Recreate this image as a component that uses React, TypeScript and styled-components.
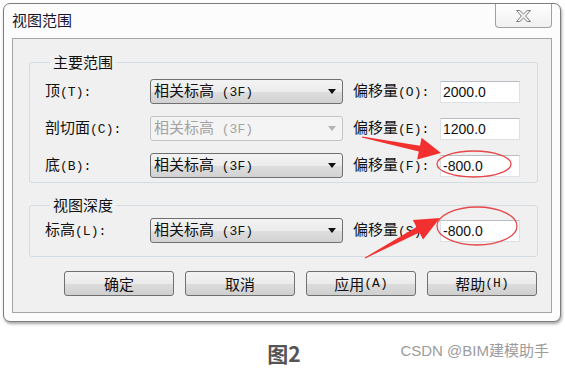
import React from 'react'
import styled, { createGlobalStyle } from 'styled-components'

const GlobalStyle = createGlobalStyle`
  html, body {
    margin: 0;
    padding: 0;
    background: #fff;
  }
  body {
    font-family: "Noto Sans CJK SC", "Noto Sans", sans-serif;
    color: #111;
  }
`

type RowData = {
  label: string
  key: string
  offsetKey: string
  value: string
  disabled?: boolean
}

const mainRows: RowData[] = [
  { label: '顶', key: 'T', offsetKey: 'O', value: '2000.0' },
  { label: '剖切面', key: 'C', offsetKey: 'E', value: '1200.0', disabled: true },
  { label: '底', key: 'B', offsetKey: 'F', value: '-800.0' },
]

const depthRows: RowData[] = [{ label: '标高', key: 'L', offsetKey: 'S', value: '-800.0' }]

const buttons = [
  { text: '确定' },
  { text: '取消' },
  { text: '应用', key: 'A' },
  { text: '帮助', key: 'H' },
]

const Row = ({ row }: { row: RowData }) => (
  <RowLine>
    <Label $w={105}>
      {row.label}
      <Mono>({row.key}):</Mono>
    </Label>
    <Combo $disabled={row.disabled}>
      <span>
        相关标高<Mono> (3F)</Mono>
      </span>
      <Caret $disabled={row.disabled} />
    </Combo>
    <Label $w={87} $ml={10}>
      偏移量<Mono>({row.offsetKey}):</Mono>
    </Label>
    <Field>{row.value}</Field>
  </RowLine>
)

export default function App() {
  return (
    <Page>
      <GlobalStyle />
      <Window>
        <TitleBar>
          <Title>视图范围</Title>
          <CloseBtn>
            <svg width="15" height="12" viewBox="0 0 15 12">
              <polygon
                points="0.5,0.5 3.8,0.5 7.5,4 11.2,0.5 14.5,0.5 9.6,6 14.5,11.5 11.2,11.5 7.5,8 3.8,11.5 0.5,11.5 5.4,6"
                fill="#f4f4f4"
                stroke="#7b7b7b"
                strokeWidth="1"
                strokeLinejoin="round"
              />
            </svg>
          </CloseBtn>
        </TitleBar>
        <Client>
          <Group $pt={9} $pb={4}>
            <Legend>主要范围</Legend>
            {mainRows.map((r) => (
              <Row key={r.key} row={r} />
            ))}
          </Group>
          <Group $pt={5} $pb={13} $mt={14}>
            <Legend>视图深度</Legend>
            {depthRows.map((r) => (
              <Row key={r.key} row={r} />
            ))}
          </Group>
          <ButtonRow>
            {buttons.map((b) => (
              <Button key={b.text}>
                {b.text}
                {b.key && <Mono>({b.key})</Mono>}
              </Button>
            ))}
          </ButtonRow>
        </Client>
      </Window>
      <Caption>
        <span />
        <FigureNo>图2</FigureNo>
        <Watermark>CSDN @BIM建模助手</Watermark>
      </Caption>
      <Overlay width="565" height="368" viewBox="0 0 565 368">
        <polygon
          points="362.1,136.5 420,145.7 421.6,137.8 441,153 417.2,159.4 418.8,151.5 361.9,137.5"
          fill="#f2302f"
        />
        <ellipse cx="474" cy="164" rx="37" ry="13" fill="none" stroke="#e5484b" strokeWidth="1.3" />
        <polygon
          points="364.8,257.6 416.5,227.1 412.8,220 440,218 423.1,239.5 419.4,232.4 365.2,258.4"
          fill="#f2302f"
        />
        <ellipse cx="477" cy="226" rx="40" ry="19" fill="none" stroke="#e5484b" strokeWidth="1.3" />
      </Overlay>
    </Page>
  )
}

const Page = styled.div`
  position: relative;
  width: 565px;
  height: 368px;
  overflow: hidden;
  box-sizing: border-box;
  padding: 3px 0 0 3px;
`

const Window = styled.div`
  width: 558px;
  box-sizing: border-box;
  border: 1px solid #7d7d7d;
  border-radius: 7px;
  background: #fcfcfc;
  padding: 0 8px 8px;
  box-shadow: 1px 2px 3px rgba(0, 0, 0, 0.35);
`

const TitleBar = styled.div`
  height: 34px;
  display: flex;
  justify-content: space-between;
  align-items: center;
`

const Title = styled.span`
  font-size: 15px;
  line-height: 18px;
  margin-top: -2px;
  color: #151530;
`

const CloseBtn = styled.div`
  align-self: flex-start;
  width: 57px;
  height: 24px;
  box-sizing: border-box;
  border: 1px solid #a0a0a0;
  border-top: none;
  border-radius: 0 0 4px 4px;
  background: linear-gradient(#ffffff, #f0f0f0);
  display: flex;
  align-items: center;
  justify-content: center;
`

const Client = styled.div`
  border: 1px solid #a5a5a5;
  background: #f0f0f0;
  padding: 15px 13px 16px 16px;
  display: flex;
  flex-direction: column;
`

const Group = styled.fieldset<{ $pt: number; $pb: number; $mt?: number }>`
  margin: ${(p) => p.$mt ?? 0}px 0 0;
  border: 1px solid #d3dce2;
  border-radius: 3px;
  padding: ${(p) => p.$pt}px 17px ${(p) => p.$pb}px 15px;
  display: flex;
  flex-direction: column;
  gap: 12px;
  min-width: 0;
`

const Legend = styled.legend`
  padding: 0 3px;
  margin-left: 5px;
  font-size: 15px;
  line-height: 16px;
`

const RowLine = styled.div`
  display: flex;
  align-items: center;
  height: 25px;
`

const Label = styled.span<{ $w: number; $ml?: number }>`
  width: ${(p) => p.$w}px;
  margin-left: ${(p) => p.$ml ?? 0}px;
  flex-shrink: 0;
  font-size: 15px;
  line-height: 18px;
  white-space: nowrap;
`

const Mono = styled.span`
  font-family: "Liberation Mono", "DejaVu Sans Mono", monospace;
  font-size: 13px;
`

const Combo = styled.div<{ $disabled?: boolean }>`
  width: 193px;
  height: 25px;
  flex-shrink: 0;
  box-sizing: border-box;
  border: 1px solid ${(p) => (p.$disabled ? '#c2c5c8' : '#707070')};
  border-radius: 3px;
  background: ${(p) =>
    p.$disabled
      ? '#f4f4f4'
      : 'linear-gradient(#f3f3f3 0%, #ececec 50%, #dedede 51%, #d2d2d2 100%)'};
  color: ${(p) => (p.$disabled ? '#a3a3a3' : '#111')};
  display: flex;
  align-items: center;
  justify-content: space-between;
  padding: 0 6px 0 3px;
  font-size: 15px;
  line-height: 18px;
`

const Caret = styled.span<{ $disabled?: boolean }>`
  width: 0;
  height: 0;
  border-left: 4.5px solid transparent;
  border-right: 4.5px solid transparent;
  border-top: 5px solid ${(p) => (p.$disabled ? '#b4b4b4' : '#111')};
`

const Field = styled.div`
  width: 80px;
  height: 22px;
  flex-shrink: 0;
  box-sizing: border-box;
  border: 1px solid #dde1e6;
  border-top-color: #b9bdc3;
  background: #fff;
  padding-left: 2px;
  display: flex;
  align-items: center;
  font-family: "Liberation Sans", Arial, sans-serif;
  font-size: 14px;
  color: #111;
`

const ButtonRow = styled.div`
  display: flex;
  gap: 11px;
  margin-top: 14px;
  padding-left: 35px;
`

const Button = styled.button`
  width: 110px;
  height: 25px;
  box-sizing: border-box;
  border: 1px solid #707070;
  border-radius: 3px;
  background: linear-gradient(#f2f2f2 0%, #ebebeb 50%, #dddddd 51%, #cfcfcf 100%);
  padding: 0;
  display: flex;
  align-items: center;
  justify-content: center;
  font-family: inherit;
  font-size: 15px;
  line-height: 18px;
  color: #111;
`

const Caption = styled.div`
  display: grid;
  grid-template-columns: 1fr auto 1fr;
  align-items: start;
  margin-top: 19px;
`

const FigureNo = styled.span`
  font-size: 21px;
  line-height: 24px;
  font-weight: 700;
  color: #555;
`

const Watermark = styled.span`
  justify-self: end;
  padding-right: 16px;
  padding-top: 1px;
  font-family: "Liberation Sans", "Noto Sans CJK SC", sans-serif;
  font-size: 15px;
  line-height: 18px;
  color: #9c9c9c;
`

const Overlay = styled.svg`
  position: absolute;
  left: 0;
  top: 0;
  pointer-events: none;
`
